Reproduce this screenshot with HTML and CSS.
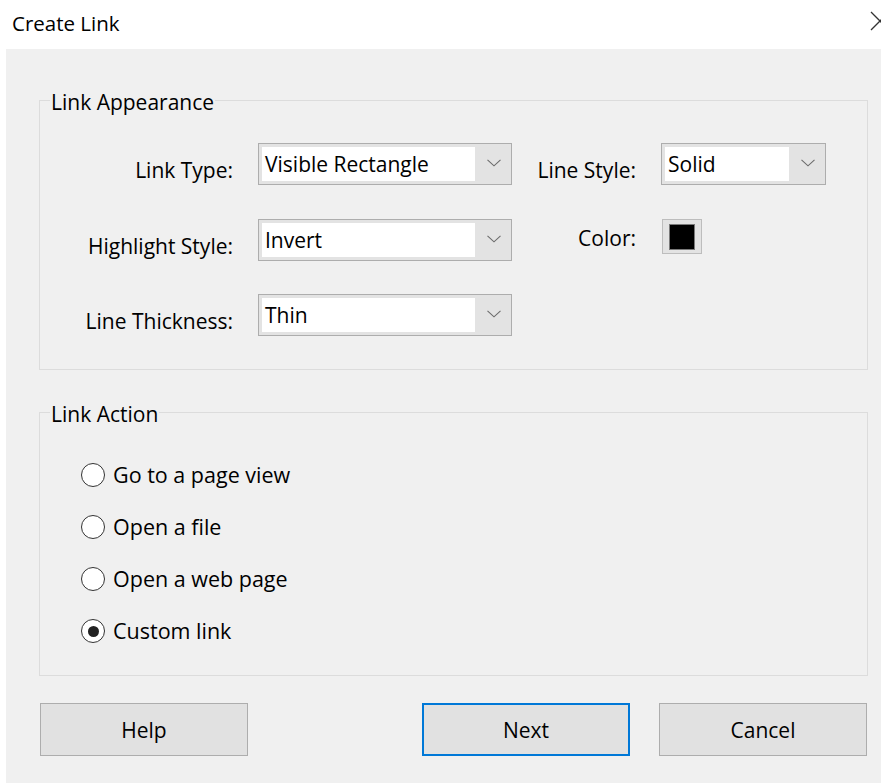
FILE: index.html
```html
<!DOCTYPE html>
<html lang="en">
<head>
<meta charset="utf-8">
<title>Create Link</title>
<link rel="stylesheet" href="styles.css">
</head>
<body>
  <header class="titlebar">
    <span class="title">Create Link</span>
    <svg class="close" width="20" height="20" viewBox="0 0 20 20" aria-label="Close">
      <path d="M1 1 L19 19 M1 19 L19 1" stroke="#333" stroke-width="1.3" fill="none"/>
    </svg>
  </header>

  <main class="dialog">
    <fieldset class="group appearance">
      <legend>Link Appearance</legend>
      <div class="form-grid">
        <label class="field-label">Link Type:</label>
        <div class="combo combo-wide">
          <span class="combo-value">Visible Rectangle</span>
          <span class="combo-arrow"><svg width="14" height="8" viewBox="0 0 14 8"><path d="M0.5 0.8 L7 6.8 L13.5 0.8" stroke="#6b6b6b" stroke-width="1.1" fill="none"/></svg></span>
        </div>
        <label class="field-label">Line Style:</label>
        <div class="combo combo-narrow">
          <span class="combo-value">Solid</span>
          <span class="combo-arrow"><svg width="14" height="8" viewBox="0 0 14 8"><path d="M0.5 0.8 L7 6.8 L13.5 0.8" stroke="#6b6b6b" stroke-width="1.1" fill="none"/></svg></span>
        </div>

        <label class="field-label">Highlight Style:</label>
        <div class="combo combo-wide">
          <span class="combo-value">Invert</span>
          <span class="combo-arrow"><svg width="14" height="8" viewBox="0 0 14 8"><path d="M0.5 0.8 L7 6.8 L13.5 0.8" stroke="#6b6b6b" stroke-width="1.1" fill="none"/></svg></span>
        </div>
        <label class="field-label color-label">Color:</label>
        <div class="swatch"><span class="swatch-fill"></span></div>

        <label class="field-label">Line Thickness:</label>
        <div class="combo combo-wide">
          <span class="combo-value">Thin</span>
          <span class="combo-arrow"><svg width="14" height="8" viewBox="0 0 14 8"><path d="M0.5 0.8 L7 6.8 L13.5 0.8" stroke="#6b6b6b" stroke-width="1.1" fill="none"/></svg></span>
        </div>
      </div>
    </fieldset>

    <fieldset class="group action">
      <legend>Link Action</legend>
      <div class="radio-list">
        <div class="radio-row"><span class="radio"></span><span>Go to a page view</span></div>
        <div class="radio-row"><span class="radio"></span><span>Open a file</span></div>
        <div class="radio-row"><span class="radio"></span><span>Open a web page</span></div>
        <div class="radio-row"><span class="radio checked"></span><span>Custom link</span></div>
      </div>
    </fieldset>

    <div class="buttons">
      <button class="btn">Help</button>
      <button class="btn btn-default">Next</button>
      <button class="btn">Cancel</button>
    </div>
  </main>
</body>
</html>
```

FILE: styles.css
```css
* {
  box-sizing: border-box;
}

html, body {
  margin: 0;
  padding: 0;
  background: #ffffff;
  overflow: hidden;
}

body {
  width: 881px;
  height: 783px;
  font-family: "Open Sans", "Noto Sans", sans-serif;
  font-size: 21px;
  color: #000;
}

/* Window caption */
.titlebar {
  height: 49px;
  display: flex;
  align-items: flex-start;
  justify-content: space-between;
  overflow: hidden;
}

.title {
  margin: 9px 0 0 12px;
  font-size: 20.5px;
  line-height: 28px;
}

.close {
  flex: none;
  margin: 11px -9px 0 0;
}

/* Dialog client area */
.dialog {
  margin-left: 6px;
  height: 734px;
  background: #f0f0f0;
  padding: 35px 13px 0 33px;
}

.group {
  margin: 0;
  padding: 0;
  min-inline-size: 0;
  border: 1px solid #dcdcdc;
}

.group legend {
  margin-left: 10px;
  padding: 4px 1px 0;
  line-height: 28px;
}

.appearance {
  padding: 27px 0 33px;
}

.action {
  margin-top: 26px;
  padding: 32px 0 29px;
}

/* Appearance form */
.form-grid {
  display: grid;
  grid-template-columns: 193px 254px 99px 165px;
  grid-template-rows: 42px 42px 42px;
  column-gap: 25px;
  row-gap: 33.5px;
}

.field-label {
  justify-self: end;
  white-space: nowrap;
  padding-top: 6px;
  line-height: 42px;
}

.color-label {
  padding-top: 0;
  line-height: 38px;
}

.combo {
  display: flex;
  height: 42px;
  padding: 3px;
  border: 1px solid #adadad;
  background: #e3e3e3;
}

.combo-value {
  flex: 1;
  background: #fff;
  padding-left: 3px;
  line-height: 34px;
  white-space: nowrap;
}

.combo-arrow {
  width: 33px;
  display: flex;
  align-items: center;
  justify-content: center;
  padding: 0 0 2px 4px;
}

.swatch {
  width: 40px;
  height: 35px;
  margin-left: 1px;
  padding: 4px 6px 3px 6px;
  border: 1px solid #bdbdbd;
  background: #e3e3e3;
}

.swatch-fill {
  display: block;
  width: 26px;
  height: 26px;
  background: #000;
  border: 1px solid #7a7a7a;
}

/* Radio buttons */
.radio-list {
  display: flex;
  flex-direction: column;
  gap: 22px;
  padding-left: 41px;
  font-size: 21.5px;
}

.radio-row {
  display: flex;
  align-items: center;
  gap: 8px;
  height: 30px;
}

.radio-row span:last-child {
  margin-top: -1px;
}

.radio {
  flex: none;
  width: 24px;
  height: 24px;
  border-radius: 50%;
  border: 1.5px solid #333;
  background: #fff;
  display: flex;
  align-items: center;
  justify-content: center;
}

.radio.checked::after {
  content: "";
  width: 11px;
  height: 11px;
  border-radius: 50%;
  background: #222;
}

/* Command buttons */
.buttons {
  display: flex;
  gap: 29px;
  margin-top: 27px;
  padding: 0 1px;
}

.btn {
  width: 208px;
  height: 53px;
  border: 1px solid #adadad;
  background: #e1e1e1;
  font: inherit;
  color: #000;
  padding: 0;
}

.btn-default {
  margin-left: auto;
  border: 2px solid #0078d7;
}
```
